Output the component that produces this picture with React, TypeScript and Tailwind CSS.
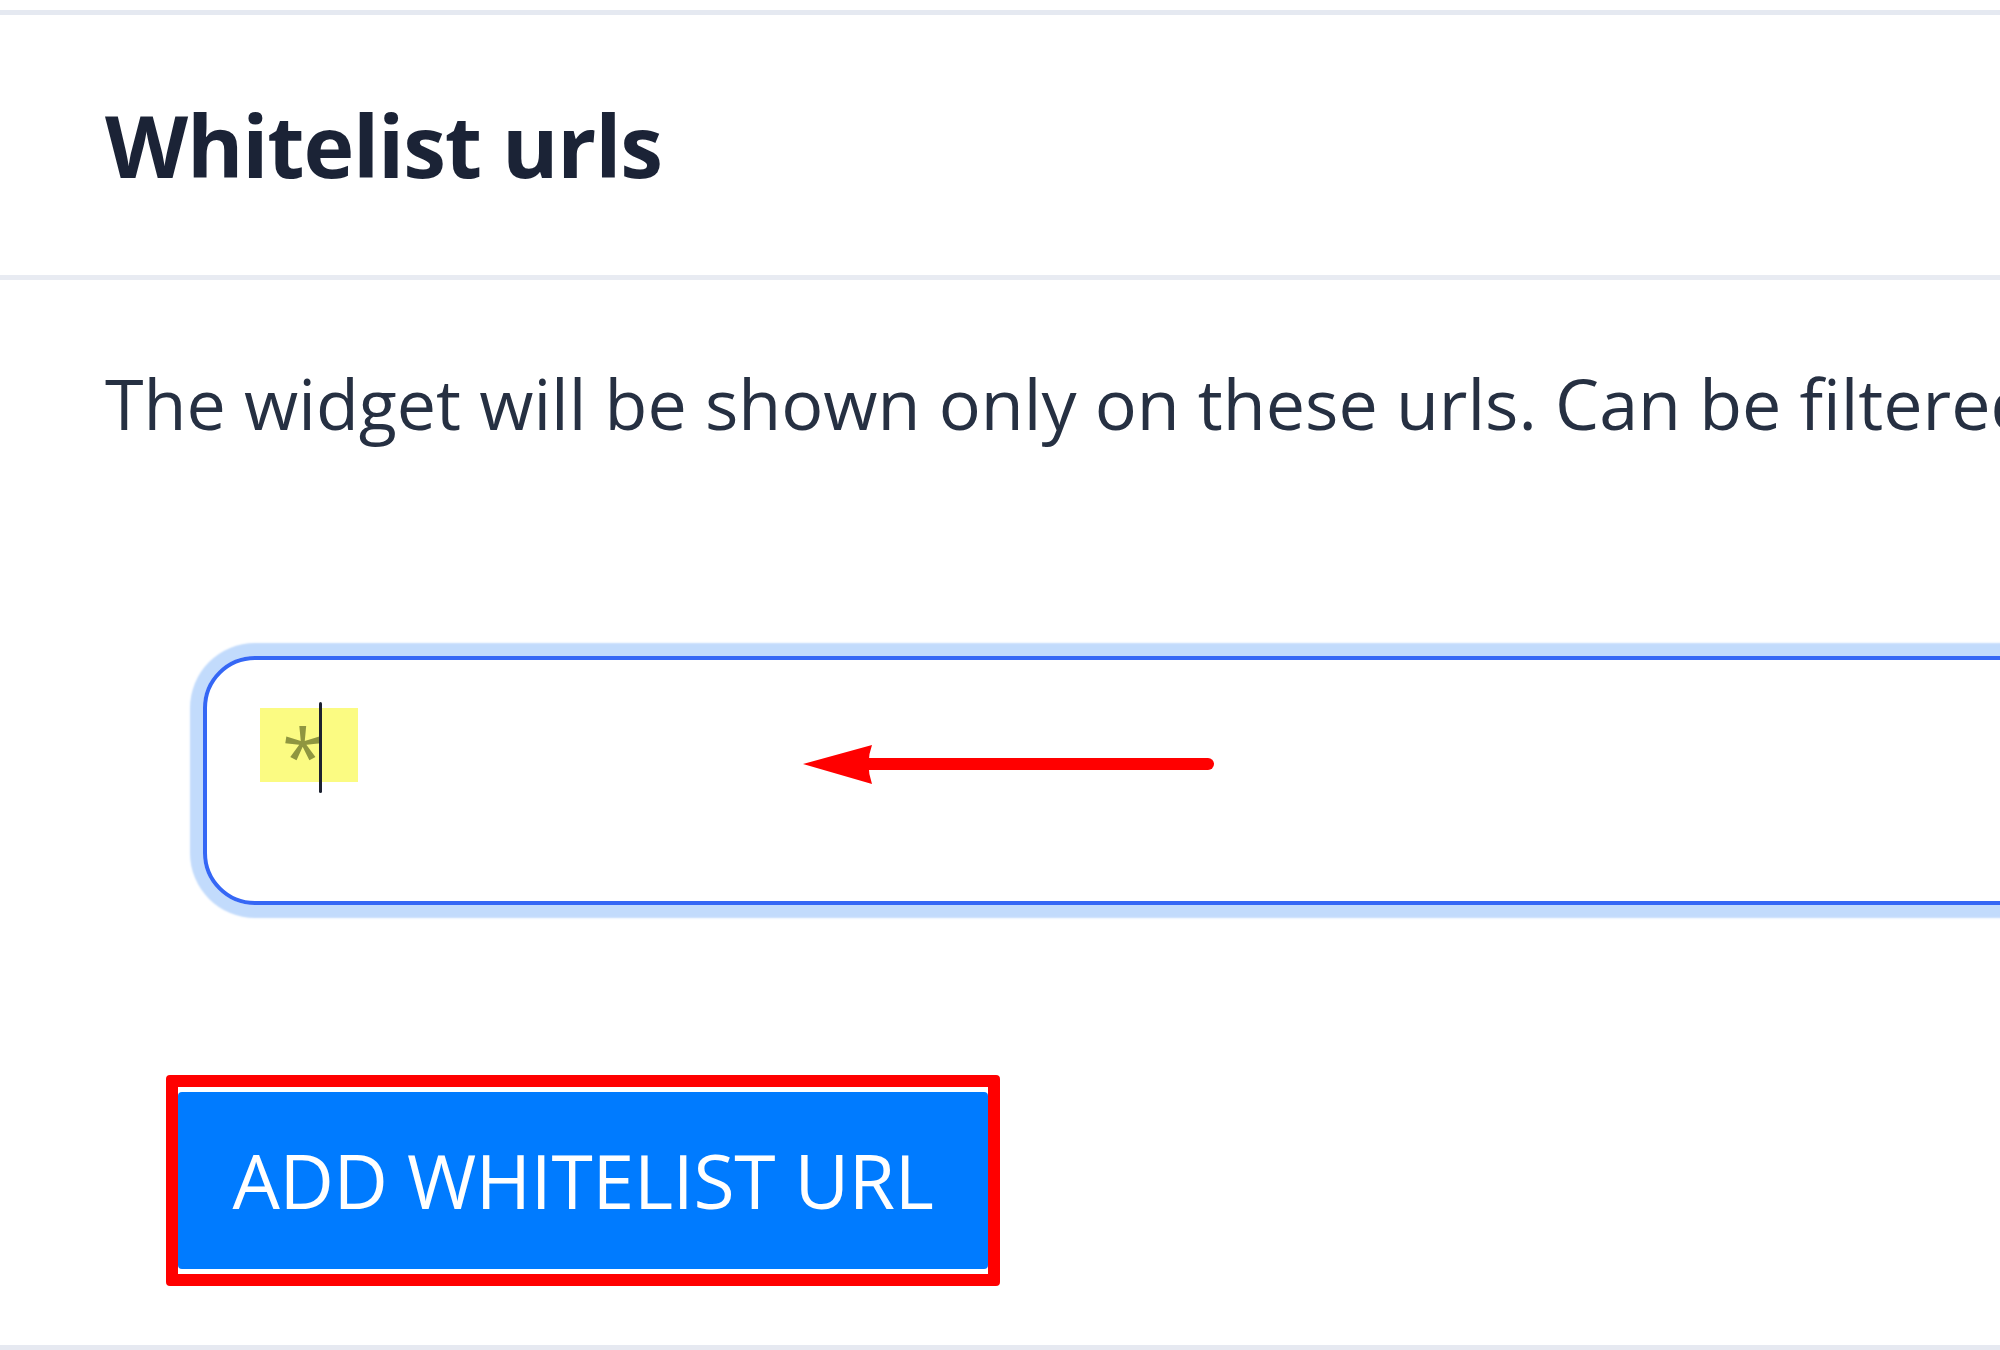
import React from "react";

export default function App() {
  return (
    <div className="relative w-[2000px] h-[1350px] overflow-hidden bg-white font-['Open_Sans',sans-serif]">
      <div className="mt-[10px] h-[5px] bg-[#e5e9f1]" />
      <div className="h-[260px] flex items-center pl-[105px]">
        <h2 className="text-[86px] tracking-[-1.2px] font-bold leading-none text-[#1b2336] whitespace-nowrap">Whitelist urls</h2>
      </div>
      <div className="h-[5px] bg-[#e8ebf2]" />
      <div className="pl-[105px] pt-[88px]">
        <p className="text-[70px] leading-none whitespace-nowrap text-[#263042]">
          The widget will be shown only on these urls. Can be filtered by wildcard.
        </p>
      </div>
      <div className="ml-[203px] mt-[218px] h-[249px] w-[2000px] rounded-[52px] border-[4px] border-[#3567f5] shadow-[0_0_2px_13px_#c2dbfc] pl-[53px] pt-[48px]">
        <span className="relative inline-flex w-[98px] h-[74px] bg-[#fbfb82] pl-[22px] text-[76px] leading-[74px] text-[#8f9640]">
          <span className="leading-none mt-[10px]">*</span>
          <span className="absolute left-[59px] top-[-6px] h-[91px] w-[3px] rounded-full bg-[#1c2130]" />
        </span>
      </div>
      <div className="ml-[166px] mt-[170px] inline-flex rounded-[4px] border-[12px] border-[#ff0000] py-[5px] px-0 bg-white">
        <button className="flex h-[177px] w-[810px] items-center justify-center rounded-[4px] bg-[#007bff] text-[75px] tracking-[-0.3px] leading-none text-white">
          ADD WHITELIST URL
        </button>
      </div>
      <div className="absolute left-0 right-0 bottom-0 h-[5px] bg-[#e6e9f1]" />
      <svg className="absolute left-[790px] top-[735px]" width="440" height="60" viewBox="0 0 440 60">
        <line x1="70" y1="29" x2="418" y2="29" stroke="#ff0000" strokeWidth="12" strokeLinecap="round" />
        <path d="M13 29 L82 10 Q75 29 82 49 Z" fill="#ff0000" />
      </svg>
    </div>
  );
}
